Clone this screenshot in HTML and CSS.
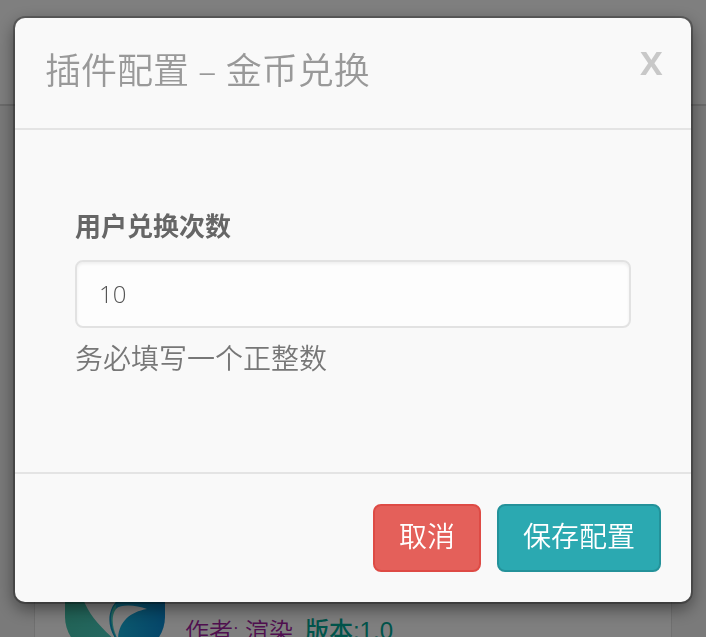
FILE: index.html
```
<!DOCTYPE html>
<html lang="zh-CN">
  <head>
    <meta charset="UTF-8" />
    <meta name="viewport" content="width=device-width, initial-scale=1.0" />
    <title>插件配置</title>
    <link rel="stylesheet" href="styles.css">
  </head>
  <body>
    <div class="page">
      <div class="topbar"></div>
      <div class="plugin-card">
        <svg class="plugin-logo" viewBox="0 0 100 100">
          <defs>
            <linearGradient id="leafGreen" x1="0" y1="0" x2="1" y2="1">
              <stop offset="0" stop-color="#40c0a0" />
              <stop offset="1" stop-color="#4cd4cc" />
            </linearGradient>
            <linearGradient id="leafBlue" x1="0" y1="0" x2="1" y2="0">
              <stop offset="0" stop-color="#18b4dc" />
              <stop offset="1" stop-color="#0a8cd4" />
            </linearGradient>
          </defs>
          <path fill="url(#leafGreen)" d="M0 0H60V100H42C20 100 0 82 0 60Z" />
          <path fill="url(#leafBlue)" d="M52 0H100V60C100 82 80 100 58 100H50Z" />
          <path fill="#fff" d="M18 0V42C24 57 33 68 51 84C45 70 42 54 52 44V0Z" />
          <path fill="#0c9cc8" d="M52 0H90V46C76 43 58 42 50 48C43 57 46 73 54 86C41 72 42 53 52 44Z" />
          <path fill="#fff" d="M82 52C71 48 56 47 51 52C45 60 48 73 53 83C53 66 64 55 82 52Z" />
        </svg>
        <p class="plugin-meta">
          <span class="author">作者: 渲染</span>
          <span class="version">版本:1.0</span>
        </p>
      </div>
    </div>

    <div class="backdrop">
      <form class="modal" role="dialog" aria-labelledby="modal-title">
        <div class="modal-header">
          <h1 id="modal-title">插件配置 – 金币兑换</h1>
          <button type="button" class="close" aria-label="关闭">x</button>
        </div>
        <div class="modal-body">
          <label for="times">用户兑换次数</label>
          <input type="text" id="times" value="10" aria-describedby="times-help">
          <p class="help" id="times-help">务必填写一个正整数</p>
        </div>
        <div class="modal-footer">
          <button type="button" class="btn btn-danger">取消</button>
          <button type="submit" class="btn btn-primary">保存配置</button>
        </div>
      </form>
    </div>
  </body>
</html>
```
FILE: styles.css
```
* {
  box-sizing: border-box;
}

body {
  margin: 0;
  height: 100vh;
  overflow: hidden;
  background: #f4f4f4;
  font-family: "Open Sans", "Noto Sans CJK SC", sans-serif;
  font-weight: 350;
}

h1,
p {
  margin: 0;
}

/* page behind the dialog */
.page {
  height: 100vh;
  overflow: hidden;
}

.topbar {
  height: 106px;
  background: #fff;
  border-bottom: 2px solid #d8d8d8;
}

.plugin-card {
  display: flex;
  align-items: flex-end;
  gap: 20px;
  margin: 420px 34px 0;
  padding: 30px;
  background: #fff;
  border: 1px solid #e0e0e0;
}

.plugin-logo {
  flex: none;
  width: 100px;
  height: 100px;
}

.plugin-meta {
  display: flex;
  gap: 12px;
  margin-bottom: 8px;
  font-size: 24px;
  line-height: 36px;
}

.author {
  color: #a020a0;
}

.version {
  color: #00a896;
  font-family: "Liberation Sans", "Noto Sans CJK SC", sans-serif;
  font-weight: 500;
}

/* dialog */
.backdrop {
  position: fixed;
  inset: 0;
  padding: 18px 15px;
  overflow: hidden;
  background: rgba(0, 0, 0, 0.5);
}

.modal {
  background: #f9f9f9;
  border-radius: 10px;
  box-shadow: 0 0 0 2px rgba(0, 0, 0, 0.25), 0 6px 18px rgba(0, 0, 0, 0.5);
}

.modal-header {
  display: flex;
  justify-content: space-between;
  align-items: flex-start;
  padding: 28px 28px 32px 30px;
  border-bottom: 2px solid #e4e4e4;
}

.modal-header h1 {
  color: #999;
  font-size: 36px;
  font-weight: 350;
  line-height: 50px;
}

.close {
  padding: 0;
  border: 0;
  background: none;
  color: #c8c8c8;
  font-family: "Open Sans", sans-serif;
  font-size: 42px;
  font-weight: 600;
  line-height: 26px;
  cursor: pointer;
}

.modal-body {
  padding: 76px 60px 94px;
}

.modal-body label {
  display: block;
  margin-bottom: 14px;
  color: #666;
  font-size: 26px;
  font-weight: 700;
  line-height: 40px;
}

.modal-body input {
  display: block;
  width: 100%;
  height: 68px;
  padding: 0 22px 2px;
  border: 2px solid #e2e2e2;
  border-radius: 8px;
  background: #fdfdfd;
  box-shadow: inset 0 2px 3px rgba(0, 0, 0, 0.06);
  color: #555;
  font-family: inherit;
  font-size: 24px;
  font-weight: 350;
}

.help {
  margin-top: 10px;
  color: #777;
  font-size: 28px;
  line-height: 40px;
}

.modal-footer {
  display: flex;
  justify-content: flex-end;
  gap: 16px;
  padding: 30px;
  border-top: 2px solid #e4e4e4;
}

.btn {
  height: 68px;
  padding: 0 24px 4px;
  border: 2px solid;
  border-radius: 8px;
  color: #fff;
  font-family: inherit;
  font-size: 28px;
  font-weight: 350;
  line-height: 40px;
  cursor: pointer;
}

.btn-danger {
  background: #e4605a;
  border-color: #de4b45;
}

.btn-primary {
  background: #2ba9b1;
  border-color: #24929a;
}
```
